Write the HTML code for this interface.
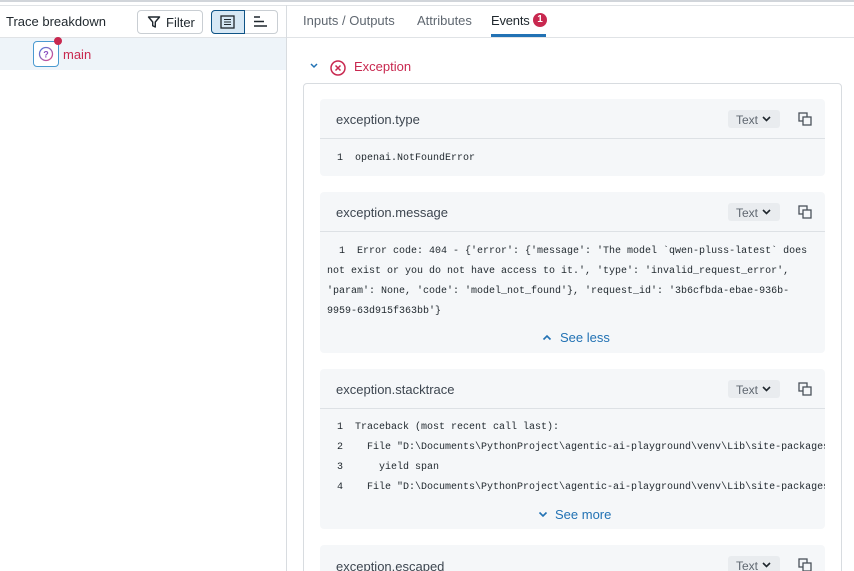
<!DOCTYPE html>
<html><head><meta charset="utf-8"><style>
*{box-sizing:border-box;margin:0;padding:0}
html,body{width:854px;height:571px;overflow:hidden}
body{background:#fff;font-family:"Liberation Sans",sans-serif;position:relative;color:#1f272d}
.a{position:absolute}
.topline{left:0;top:0;width:854px;height:2px;background:#d1d5da}
.topline2{left:0;top:5px;width:854px;height:1px;background:#e0e3e6}
.vline{left:286px;top:5px;width:1px;height:566px;background:#d8dce0}
.hdr{left:0;top:37px;width:286px;height:1px;background:#e0e3e6}
.btn{border:1px solid #c9ced3;border-radius:4px;height:24px;background:#fff}
.mono{font-family:"Liberation Mono",monospace;font-size:10px;color:#1f272d}
.blk{position:absolute;left:320px;width:505px;background:#f5f7f9;border-radius:4px}
.bh{height:40px;border-bottom:1px solid #dde1e5;position:relative}
.bh span.t{position:absolute;left:16px;top:13px;font-size:13px;color:#3d4650}
.tx{position:absolute;left:408px;top:11px;width:52px;height:18px;background:#e9ecef;border-radius:3px;font-size:12px;color:#5f6770;padding:3px 0 0 8px}
.tx svg{position:absolute;left:34px;top:6px}
.cp{position:absolute;left:478px;top:13px}
.ln{position:absolute;white-space:pre;line-height:20px}
.see{position:absolute;font-size:13px;color:#2272b4}
.see svg{position:absolute;left:0;top:4px}
</style></head><body>
<div class="a topline"></div><div class="a topline2"></div>
<div class="a vline"></div>
<div class="a" style="left:6px;top:14px;font-size:13px">Trace breakdown</div>
<div class="a btn" style="left:137px;top:10px;width:66px">
<svg class="a" style="left:9px;top:4px" width="14" height="14" viewBox="0 0 14 14"><path d="M1.5 2h11l-4.2 5v5l-2.6-1.3V7z" fill="none" stroke="#1f272d" stroke-width="1.4" stroke-linejoin="round"/></svg>
<span class="a" style="left:28px;top:4px;font-size:13px">Filter</span></div>
<div class="a" style="left:211px;top:10px;width:67px;height:24px;border:1px solid #c9ced3;border-radius:4px"></div>
<div class="a" style="left:211px;top:10px;width:34px;height:24px;border:1px solid #0e5386;border-radius:4px 0 0 4px;background:#d7e8f5"></div>
<svg class="a" style="left:220px;top:15px" width="15" height="14" viewBox="0 0 15 14"><rect x="1" y="1" width="13" height="12" fill="none" stroke="#1f272d" stroke-width="1.3"/><path d="M4 4.5h7M4 7h7M4 9.5h7" stroke="#1f272d" stroke-width="1.1"/></svg>
<svg class="a" style="left:253px;top:15px" width="16" height="13" viewBox="0 0 16 13"><path d="M1 2h6M1 6.5h10M1 11h13" stroke="#1f272d" stroke-width="1.4"/></svg>
<div class="a hdr"></div>
<div class="a" style="left:0;top:38px;width:286px;height:32px;background:#eef4f9"></div>
<div class="a" style="left:33px;top:41px;width:26px;height:26px;border:1px solid #4a9ad0;border-radius:4px;background:#fff"></div>
<svg class="a" style="left:38px;top:46px" width="16" height="16" viewBox="0 0 16 16"><defs><linearGradient id="g" x1="0" y1="0" x2="1" y2="1"><stop offset="0" stop-color="#4a7be0"/><stop offset="1" stop-color="#e14a8a"/></linearGradient></defs><circle cx="8" cy="8" r="6.5" fill="none" stroke="url(#g)" stroke-width="1.3"/><text x="8" y="11.5" text-anchor="middle" font-size="9" font-weight="bold" fill="#8a4fc0" font-family="Liberation Sans">?</text></svg>
<div class="a" style="left:54px;top:37px;width:8px;height:8px;border-radius:50%;background:#c8284f"></div>
<div class="a" style="left:63px;top:47px;font-size:13px;color:#c8284f">main</div>

<div class="a" style="left:287px;top:37px;width:567px;height:1px;background:#e0e3e6"></div>
<div class="a" style="left:303px;top:13px;font-size:13px;color:#5f6770">Inputs / Outputs</div>
<div class="a" style="left:417px;top:13px;font-size:13px;color:#5f6770">Attributes</div>
<div class="a" style="left:491px;top:13px;font-size:13px;color:#1f272d;letter-spacing:-0.2px">Events</div>
<div class="a" style="left:533px;top:13px;width:14px;height:14px;border-radius:50%;background:#c8284f;color:#fff;font-size:10px;font-weight:bold;text-align:center;line-height:14px">1</div>
<div class="a" style="left:491px;top:34px;width:55px;height:3px;background:#2272b4"></div>

<svg class="a" style="left:309px;top:62px" width="10" height="8" viewBox="0 0 10 8"><path d="M2 2l3 3 3-3" fill="none" stroke="#2272b4" stroke-width="1.5"/></svg>
<svg class="a" style="left:329px;top:59px" width="18" height="18" viewBox="0 0 18 18"><circle cx="9" cy="9" r="7" fill="none" stroke="#c8284f" stroke-width="1.5"/><path d="M6.5 6.5l5 5M11.5 6.5l-5 5" stroke="#c8284f" stroke-width="1.5"/></svg>
<div class="a" style="left:354px;top:59px;font-size:13px;color:#c8284f">Exception</div>
<div class="a" style="left:303px;top:83px;width:539px;height:500px;border:1px solid #d8dce0;border-radius:4px"></div>

<div class="blk" style="top:99px;height:77px">
<div class="bh"><span class="t">exception.type</span><div class="tx">Text<svg width="9" height="6" viewBox="0 0 9 6"><path d="M1 1l3.5 3.5L8 1" fill="none" stroke="#1f272d" stroke-width="1.6"/></svg></div>
<svg class="cp" width="14" height="14" viewBox="0 0 14 14"><rect x="1" y="1" width="8" height="8" fill="none" stroke="#4a525a" stroke-width="1.3"/><rect x="5" y="5" width="8" height="8" fill="#f5f7f9" stroke="#4a525a" stroke-width="1.3"/></svg></div>
<div class="ln mono" style="left:17px;top:50px">1  openai.NotFoundError</div>
</div>

<div class="blk" style="top:192px;height:161px">
<div class="bh"><span class="t">exception.message</span><div class="tx">Text<svg width="9" height="6" viewBox="0 0 9 6"><path d="M1 1l3.5 3.5L8 1" fill="none" stroke="#1f272d" stroke-width="1.6"/></svg></div>
<svg class="cp" width="14" height="14" viewBox="0 0 14 14"><rect x="1" y="1" width="8" height="8" fill="none" stroke="#4a525a" stroke-width="1.3"/><rect x="5" y="5" width="8" height="8" fill="#f5f7f9" stroke="#4a525a" stroke-width="1.3"/></svg></div>
<div class="ln mono" style="left:7px;top:50px">  1  Error code: 404 - {'error': {'message': 'The model `qwen-pluss-latest` does
not exist or you do not have access to it.', 'type': 'invalid_request_error',
'param': None, 'code': 'model_not_found'}, 'request_id': '3b6cfbda-ebae-936b-
9959-63d915f363bb'}</div>
<div class="see" style="left:222px;top:138px"><svg width="10" height="7" viewBox="0 0 10 7"><path d="M1.5 5.5L5 2l3.5 3.5" fill="none" stroke="#2272b4" stroke-width="1.6"/></svg><span style="margin-left:18px">See less</span></div>
</div>

<div class="blk" style="top:369px;height:160px;overflow:hidden">
<div class="bh"><span class="t">exception.stacktrace</span><div class="tx">Text<svg width="9" height="6" viewBox="0 0 9 6"><path d="M1 1l3.5 3.5L8 1" fill="none" stroke="#1f272d" stroke-width="1.6"/></svg></div>
<svg class="cp" width="14" height="14" viewBox="0 0 14 14"><rect x="1" y="1" width="8" height="8" fill="none" stroke="#4a525a" stroke-width="1.3"/><rect x="5" y="5" width="8" height="8" fill="#f5f7f9" stroke="#4a525a" stroke-width="1.3"/></svg></div>
<div class="ln mono" style="left:17px;top:49px">1  Traceback (most recent call last):
2    File "D:\Documents\PythonProject\agentic-ai-playground\venv\Lib\site-packages
3      yield span
4    File "D:\Documents\PythonProject\agentic-ai-playground\venv\Lib\site-packages</div>
<div class="see" style="left:218px;top:138px"><svg width="10" height="7" viewBox="0 0 10 7"><path d="M1.5 1.5L5 5l3.5-3.5" fill="none" stroke="#2272b4" stroke-width="1.6"/></svg><span style="margin-left:17px">See more</span></div>
</div>

<div class="blk" style="top:545px;height:40px;overflow:hidden">
<div class="bh"><span class="t" style="top:14px">exception.escaped</span><div class="tx">Text<svg width="9" height="6" viewBox="0 0 9 6"><path d="M1 1l3.5 3.5L8 1" fill="none" stroke="#1f272d" stroke-width="1.6"/></svg></div>
<svg class="cp" width="14" height="14" viewBox="0 0 14 14"><rect x="1" y="1" width="8" height="8" fill="none" stroke="#4a525a" stroke-width="1.3"/><rect x="5" y="5" width="8" height="8" fill="#f5f7f9" stroke="#4a525a" stroke-width="1.3"/></svg></div>
</div>
</body></html>
